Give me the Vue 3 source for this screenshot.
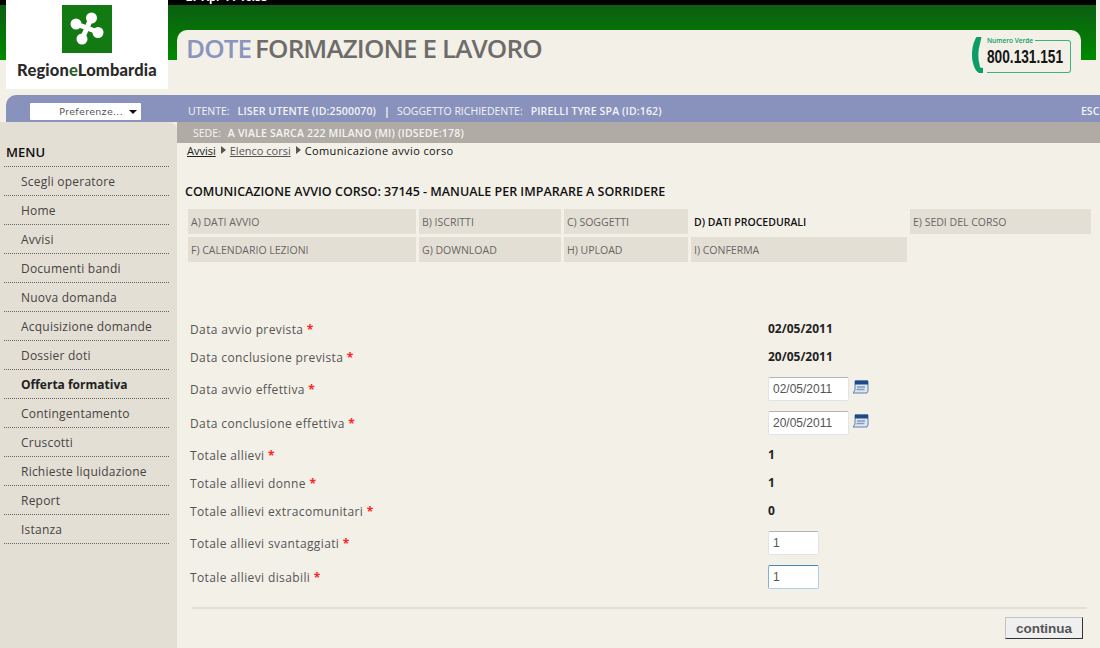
<template>
  <div class="page">
    <header class="top">
      <div class="band">
        <div class="strip"><span>27 Apr 11 16:53</span></div>
        <div class="green"></div>
      </div>
      <div class="logo">
        <svg class="logo-mark" width="50" height="48" viewBox="0 0 50 48">
          <rect width="50" height="48" fill="#137a13" />
          <g stroke="#fff" stroke-width="5" stroke-linecap="round" fill="none">
            <path d="M29 13 L25 23 L36 27" />
            <path d="M14 19 L25 23 L20 34" />
          </g>
          <g fill="#fff">
            <circle cx="29.500" cy="13" r="5.500" />
            <circle cx="36" cy="27.500" r="5.500" />
            <circle cx="20" cy="34" r="5.500" />
            <circle cx="14" cy="19" r="5.500" />
          </g>
        </svg>
        <div class="logo-name">Region<span>e</span>Lombardia</div>
      </div>
      <div class="title-panel">
        <h1 class="app-title"><span>DOTE</span> FORMAZIONE E LAVORO</h1>
        <div class="phone">
          <svg class="phone-icon" width="12" height="37" viewBox="0 0 12 37">
            <path d="M4.500 0 H9.500 L7.500 9 C6 14 6 22 7.500 27 L8 30.500 L11 31 V36 H7 C3 34 0 26 0 18 C0 10 2 4 4.500 0 Z" fill="#0c9c66" />
          </svg>
          <div class="phone-box">
            <span class="phone-label">Numero Verde</span>
            <span class="phone-num">800.131.151</span>
          </div>
        </div>
      </div>
    </header>

    <div class="user-bar">
      <div class="prefs"><span>Preferenze...</span><i></i></div>
      <div class="user-info">
        <span>UTENTE:</span><b>LISER UTENTE (ID:2500070)</b><span class="sep">|</span><span>SOGGETTO RICHIEDENTE:</span><b>PIRELLI TYRE SPA (ID:162)</b>
      </div>
      <a class="esc">ESCI</a>
    </div>

    <div class="body">
      <aside class="side">
        <div class="menu-title">MENU</div>
        <a v-for="item in menu" :key="item" class="menu-item" :class="{ on: item === 'Offerta formativa' }">{{ item }}</a>
      </aside>

      <main class="main">
        <div class="sede"><span>SEDE:</span><b>A VIALE SARCA 222 MILANO (MI) (IDSEDE:178)</b></div>
        <div class="crumbs">
          <a class="first">Avvisi</a><i></i><a>Elenco corsi</a><i></i><span>Comunicazione avvio corso</span>
        </div>
        <h2 class="page-title">COMUNICAZIONE AVVIO CORSO: 37145 - MANUALE PER IMPARARE A SORRIDERE</h2>

        <div class="tabs">
          <a v-for="t in tabs" :key="t" class="tab" :class="{ active: t === 'D) DATI PROCEDURALI' }">{{ t }}</a>
        </div>

        <div class="form">
          <div v-for="r in rows" :key="r.label" class="row" :class="{ tall: r.input }">
            <label>{{ r.label }} <em>*</em></label>
            <div class="val">
              <template v-if="r.input">
                <span class="field" :class="[r.input, { focus: r.focus }]">{{ r.value }}</span>
                <svg v-if="r.input === 'date'" class="cal" width="16" height="14" viewBox="0 0 16 14">
                  <path d="M2 1 H15 V11 L14 13 H0 L2 10 Z" fill="#dfe6f0" stroke="#5b80ac" />
                  <rect x="2" y="0.500" width="13" height="4" fill="#1c4a86" />
                  <path d="M4 7 H12 M3.500 9.500 H11.500" stroke="#7f9cc0" stroke-width="1.500" />
                </svg>
              </template>
              <b v-else>{{ r.value }}</b>
            </div>
          </div>
        </div>

        <div class="actions">
          <button class="btn" type="button">continua</button>
        </div>
      </main>
    </div>
  </div>
</template>

<script setup>
const menu = [
  'Scegli operatore', 'Home', 'Avvisi', 'Documenti bandi', 'Nuova domanda',
  'Acquisizione domande', 'Dossier doti', 'Offerta formativa', 'Contingentamento',
  'Cruscotti', 'Richieste liquidazione', 'Report', 'Istanza',
]

const tabs = [
  'A) DATI AVVIO', 'B) ISCRITTI', 'C) SOGGETTI', 'D) DATI PROCEDURALI', 'E) SEDI DEL CORSO',
  'F) CALENDARIO LEZIONI', 'G) DOWNLOAD', 'H) UPLOAD', 'I) CONFERMA',
]

const rows = [
  { label: 'Data avvio prevista', value: '02/05/2011' },
  { label: 'Data conclusione prevista', value: '20/05/2011' },
  { label: 'Data avvio effettiva', value: '02/05/2011', input: 'date' },
  { label: 'Data conclusione effettiva', value: '20/05/2011', input: 'date' },
  { label: 'Totale allievi', value: '1' },
  { label: 'Totale allievi donne', value: '1' },
  { label: 'Totale allievi extracomunitari', value: '0' },
  { label: 'Totale allievi svantaggiati', value: '1', input: 'num' },
  { label: 'Totale allievi disabili', value: '1', input: 'num', focus: true },
]
</script>

<style>
html, body { margin: 0; background: #f3f0e8; overflow: hidden; }
</style>

<style scoped>
.page {
  width: 1100px;
  height: 648px;
  overflow: hidden;
  font-family: "Open Sans", "Noto Sans", sans-serif;
  font-size: 12px;
  color: #444;
  background: #f3f0e8;
}

.top { position: relative; height: 95px; }
.band { width: 1096px; }
.strip {
  height: 5px;
  background: #000;
  overflow: hidden;
  color: #fff;
  font-weight: 700;
  font-size: 11px;
  line-height: 1;
  padding-left: 186px;
}
.strip span { display: block; margin-top: -9px; }
.green { height: 55px; background: linear-gradient(#0b5e10, #008a00); }

.logo {
  position: absolute;
  left: 6px;
  top: 0;
  width: 162px;
  height: 89px;
  background: #fff;
  display: flex;
  flex-direction: column;
  align-items: center;
}
.logo-mark { margin-top: 5px; }
.logo-name {
  font-family: Lato, "Open Sans", sans-serif;
  font-weight: 900;
  font-size: 16.500px;
  line-height: 20px;
  margin-top: 7px;
  letter-spacing: 0.15px;
  color: #2b2b2b;
}
.logo-name span { color: #2f5f2f; }

.title-panel {
  margin: -30px 19px 0 177px;
  height: 65px;
  background: #f3f0e8;
  border-radius: 10px 10px 0 0;
  display: flex;
  justify-content: space-between;
  align-items: flex-start;
  position: relative;
}
.app-title {
  margin: 2px 0 0 9px;
  font-size: 26px;
  line-height: 32px;
  font-weight: 600;
  letter-spacing: -0.88px;
  color: #6e6c6a;
  white-space: nowrap;
}
.app-title span { color: #8a94be; margin-right: -2px; }

.phone { display: flex; margin: 6px 10px 0 0; }
.phone-icon { margin-top: 1px; margin-right: 3px; }
.phone-box {
  width: 84px;
  height: 33px;
  margin-top: 4px;
  border: 1px solid #3cb482;
  border-left: 0;
  border-radius: 0 3px 3px 0;
  box-sizing: border-box;
  position: relative;
  text-align: left;
}
.phone-label {
  position: absolute;
  left: 0;
  top: -5px;
  background: #f3f0e8;
  color: #0c9c66;
  font-size: 6.500px;
  line-height: 9px;
  padding-right: 2px;
  font-weight: 600;
  white-space: nowrap;
}
.phone-num {
  display: block;
  margin-top: 6px;
  font-family: "Liberation Sans", sans-serif;
  font-size: 18px;
  line-height: 20px;
  font-weight: 700;
  color: #161616;
  white-space: nowrap;
  transform: scaleX(0.76);
  transform-origin: left;
}

.user-bar {
  margin-left: 6px;
  height: 27px;
  background: #8892bd;
  border-radius: 10px 0 0 0;
  display: flex;
  align-items: center;
  overflow: hidden;
  color: #f4f4f4;
  font-size: 10.500px;
  white-space: nowrap;
}
.prefs {
  width: 111px;
  height: 17px;
  margin: 5px 0 0 24px;
  flex: none;
  background: #fff;
  border-radius: 1px;
  box-sizing: border-box;
  display: flex;
  align-items: center;
  justify-content: flex-end;
  padding-right: 4px;
  font-family: "DejaVu Sans", sans-serif;
  font-size: 9.500px;
  color: #555;
  letter-spacing: 0.3px;
}
.prefs i {
  margin: 2px 0 0 6px;
  border: 4px solid transparent;
  border-top: 4px solid #111;
  border-bottom: 0;
}
.user-info { margin: 4px 0 0 47px; display: flex; font-weight: 500; }
.user-info b { font-weight: 600; margin-left: 8px; letter-spacing: 0.15px; }
.user-info .sep { margin: 0 7px 0 8px; font-weight: 700; }
.esc { margin: 4px 0 0 auto; flex: none; width: 19px; overflow: hidden; font-weight: 600; }

.body { display: flex; height: 526px; }
.side {
  width: 177px;
  flex: none;
  background: #e4dfd4;
  border-radius: 0 8px 0 0;
  box-sizing: border-box;
  padding: 0 8px 0 4px;
}
.menu-title {
  height: 45px;
  line-height: 60px;
  box-sizing: border-box;
  padding-left: 2px;
  font-size: 13px;
  font-weight: 600;
  color: #111;
  border-bottom: 1px dotted #666;
}
.menu-item {
  display: block;
  height: 29px;
  box-sizing: border-box;
  line-height: 30px;
  padding-left: 17px;
  border-bottom: 1px dotted #666;
  color: #444;
  font-size: 12px;
  letter-spacing: 0.22px;
}
.menu-item.on { font-weight: 700; color: #222; letter-spacing: 0; }

.main { flex: 1; min-width: 0; }
.sede {
  height: 21px;
  line-height: 23px;
  background: #b0aba4;
  color: #f4f4f4;
  font-size: 10.500px;
  padding-left: 16px;
  font-weight: 500;
}
.sede b { font-weight: 600; margin-left: 7px; letter-spacing: 0.2px; }

.crumbs {
  margin: -1px 0 0 10px;
  height: 16px;
  display: flex;
  align-items: center;
  font-size: 11px;
  color: #111;
}
.crumbs a { color: #555; text-decoration: underline; }
.crumbs a.first { color: #222; }
.crumbs span { letter-spacing: 0.38px; }
.crumbs i {
  margin: 0 4px 0 5px;
  border: 4px solid transparent;
  border-left: 5px solid #555;
  border-right: 0;
}

.page-title {
  margin: 25px 0 0 8px;
  font-size: 12.500px;
  line-height: 18px;
  font-weight: 600;
  color: #111;
  white-space: nowrap;
}

.tabs {
  margin: 8px 0 0 11px;
  display: grid;
  grid-template-columns: 228px 142px 124px 216px 181px;
  grid-auto-rows: 25px;
  gap: 3px;
  width: 903px;
}
.tab {
  background: #e4dfd4;
  color: #666;
  font-size: 10.500px;
  line-height: 27px;
  padding-left: 3px;
}
.tab.active { background: none; color: #111; font-weight: 600; }

.form { margin: 53px 0 0 13px; }
.row { display: flex; align-items: center; height: 28px; }
.row.tall { height: 34px; }
.row:nth-child(3), .row:nth-child(5), .row:nth-child(8) { margin-top: 1px; }
.row label { width: 578px; flex: none; color: #555; letter-spacing: 0.38px; }
.row em { color: #f22; font-style: normal; font-weight: 700; }
.val { display: flex; align-items: center; color: #222; }
.val b { font-weight: 700; font-size: 12px; color: #222; margin-top: -1px; }

.field {
  display: block;
  height: 24px;
  line-height: 22px;
  box-sizing: border-box;
  background: #fff;
  border: 1px solid #dfe3ea;
  border-top-color: #b4b4b4;
  border-radius: 2px;
  padding-left: 4px;
  font-family: "Liberation Sans", Arial, sans-serif;
  font-size: 12px;
  color: #555;
}
.field.date { width: 81px; }
.field.num { width: 51px; }
.field.focus { border-color: #a9d0ec; border-top-color: #4a86b8; border-left-color: #7fb0d6; }
.cal { margin: -5px 0 0 4px; }

.actions {
  margin: 13px 13px 0 15px;
  border-top: 2px solid #e4dfd4;
  border-bottom: 2px solid #e4dfd4;
  height: 39px;
  display: flex;
  justify-content: flex-end;
  align-items: flex-start;
}
.btn {
  margin: 8px 4px 0 0;
  width: 78px;
  height: 22px;
  padding: 0;
  background: #efefef;
  border: 1px solid;
  border-color: #c4c4c0 #333 #333 #c4c4c0;
  font-family: "Liberation Sans", Arial, sans-serif;
  font-size: 13.500px;
  font-weight: 700;
  color: #555;
}
</style>
